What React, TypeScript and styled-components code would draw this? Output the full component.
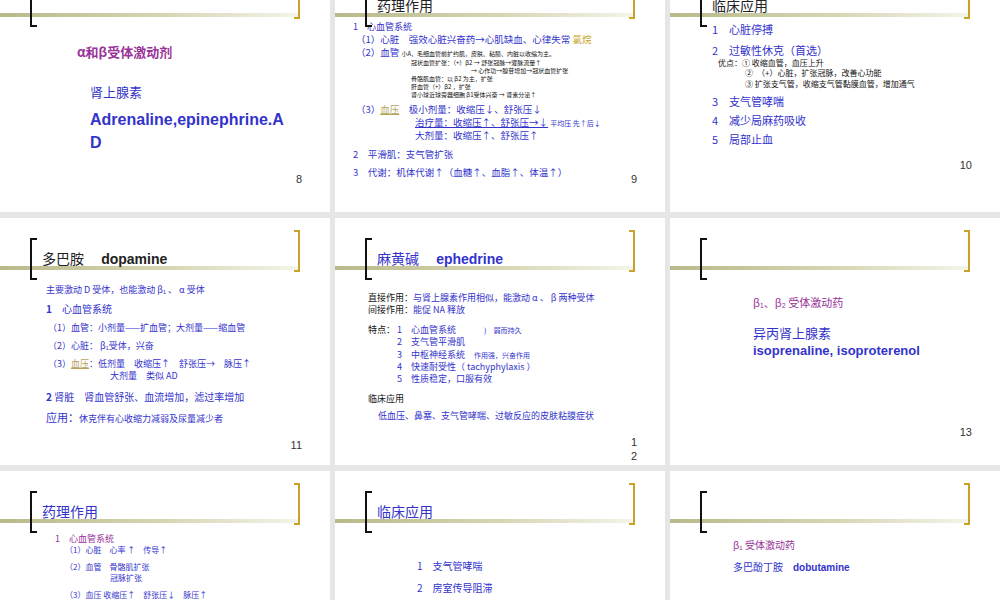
import React from 'react'
import styled, { createGlobalStyle } from 'styled-components'

const Global = createGlobalStyle`
  body { margin: 0; background: #e6e6e6; font-family: "Noto Sans CJK SC", "Liberation Sans", sans-serif; overflow: hidden; }
`

const Grid = styled.div`
  display: grid;
  grid-template-columns: 330px 330px 330px;
  grid-auto-rows: 247px;
  gap: 6px 5px;
  margin-top: -35px;
  width: 1000px;
`

const SlideBox = styled.div`
  position: relative;
  background: #fff;
  overflow: hidden;
  color: #3333cc;
`

const Rule = styled.div`
  position: absolute;
  left: 0;
  right: 30px;
  top: 48px;
  height: 4px;
  background: linear-gradient(90deg, #b9b98a 0%, #d6d6b4 55%, #f4f4ea 100%);
`

const LeftBracket = styled.div`
  position: absolute;
  left: 30px;
  top: 20px;
  width: 5px;
  height: 38px;
  border: 2px solid #111;
  border-right: none;
`

const RightBracket = styled.div`
  position: absolute;
  right: 30px;
  top: 12px;
  width: 4px;
  height: 38px;
  border: 2px solid #c9a227;
  border-left: none;
`

const Title = styled.div<{ $color?: string }>`
  position: absolute;
  left: 42px;
  top: 30px;
  font-size: 14px;
  color: ${p => p.$color || '#222'};
  white-space: nowrap;
`

const Body = styled.div<{ $top?: number; $left?: number }>`
  padding: ${p => p.$top ?? 62}px 8px 0 ${p => p.$left ?? 20}px;
  display: flex;
  flex-direction: column;
`

const Line = styled.div<{ $size?: number; $color?: string; $indent?: number; $gap?: number; $bold?: boolean }>`
  font-size: ${p => p.$size ?? 10}px;
  color: ${p => p.$color || '#3333cc'};
  padding-left: ${p => p.$indent ?? 0}px;
  margin-top: ${p => p.$gap ?? 0}px;
  font-weight: ${p => (p.$bold ? 700 : 400)};
  white-space: nowrap;
  line-height: 1.35;
`

const Latin = styled.span`
  font-family: "Liberation Sans", sans-serif;
  font-weight: 700;
`

const U = styled.span`
  color: #b5a35a;
  text-decoration: underline;
`

const PageNo = styled.div<{ $top: number }>`
  position: absolute;
  right: 28px;
  top: ${p => p.$top}px;
  font-family: "Liberation Sans", sans-serif;
  font-size: 11px;
  color: #333;
  line-height: 1.3;
  text-align: center;
`

function Slide({ title, titleColor, children }: { title?: React.ReactNode; titleColor?: string; children?: React.ReactNode }) {
  return (
    <SlideBox>
      <Rule />
      <LeftBracket />
      <RightBracket />
      {title && <Title $color={titleColor}>{title}</Title>}
      {children}
    </SlideBox>
  )
}

export default function App() {
  return (
    <>
      <Global />
      <Grid>
        <Slide>
          <Body $top={78} $left={77}>
            <Line $size={13} $color="#993399" $bold>α和β受体激动剂</Line>
            <Line $size={13} $indent={13} $gap={22}>肾上腺素</Line>
            <Line $size={16} $indent={13} $gap={8}><Latin>Adrenaline,epinephrine.A</Latin></Line>
            <Line $size={16} $indent={13}><Latin>D</Latin></Line>
          </Body>
          <PageNo $top={207}>8</PageNo>
        </Slide>
        <Slide title="药理作用">
          <Body $top={56} $left={18}>
            <Line $size={9}>1　心血管系统</Line>
            <Line $size={9.5} $indent={3}>（1）心脏　强效心脏兴奋药→心肌缺血、心律失常 <span style={{ color: '#c9a227' }}>氯烷</span></Line>
            <Line $size={9.5} $indent={3}>（2）血管 <span style={{ fontSize: 6, color: '#111' }}>小A，毛细血管前扩约肌，皮肤、粘膜、内脏以收缩为主。</span></Line>
            <Line $size={6} $color="#111" $indent={58}>冠状血管扩张：（+）β2 → 舒张冠脉→灌脉流量↑</Line>
            <Line $size={6} $color="#111" $indent={118}>→ 心作功→腺苷增加→冠状血管扩张</Line>
            <Line $size={6} $color="#111" $indent={58}>骨骼肌血管：以 β2 为主，扩张</Line>
            <Line $size={6} $color="#111" $indent={58}>肝血管（+）β2 ，扩张</Line>
            <Line $size={6} $color="#111" $indent={58}>肾小球近球旁器细胞 β1受体兴奋 → 肾素分泌↑</Line>
            <Line $size={9.5} $indent={3} $gap={4}>（3）<U>血压</U>　极小剂量：收缩压↓、舒张压↓</Line>
            <Line $size={9.5} $indent={62}><span style={{ textDecoration: 'underline' }}>治疗量：收缩压↑、舒张压→↓</span> <span style={{ fontSize: 7 }}>平均压 先↑后↓</span></Line>
            <Line $size={9.5} $indent={62}>大剂量：收缩压↑、舒张压↑</Line>
            <Line $size={9.5} $gap={6}>2　平滑肌：支气管扩张</Line>
            <Line $size={9.5} $gap={6}>3　代谢：机体代谢↑（血糖↑、血脂↑、体温↑）</Line>
          </Body>
          <PageNo $top={207}>9</PageNo>
        </Slide>
        <Slide title="临床应用">
          <Body $top={57} $left={42}>
            <Line $size={11}>1　心脏停搏</Line>
            <Line $size={11} $gap={6}>2　过敏性休克（首选）</Line>
            <Line $size={8} $color="#111" $indent={6}>优点：① 收缩血管，血压上升</Line>
            <Line $size={8} $color="#111" $indent={33}>②　（+）心脏，扩张冠脉，改善心功能</Line>
            <Line $size={8} $color="#111" $indent={33}>③ 扩张支气管，收缩支气管黏膜血管，增加通气</Line>
            <Line $size={11} $gap={4}>3　支气管哮喘</Line>
            <Line $size={11} $gap={4}>4　减少局麻药吸收</Line>
            <Line $size={11} $gap={4}>5　局部止血</Line>
          </Body>
          <PageNo $top={193}>10</PageNo>
        </Slide>

        <Slide title={<>多巴胺　 <Latin>dopamine</Latin></>}>
          <Body $top={66} $left={46}>
            <Line $size={9}>主要激动 D 受体，也能激动 β₁ 、 α 受体</Line>
            <Line $size={10} $gap={6}><b>1</b>　心血管系统</Line>
            <Line $size={9} $gap={6} $indent={2}>（1）血管：小剂量——扩血管；大剂量——缩血管</Line>
            <Line $size={9} $gap={6} $indent={2}>（2）心脏： β₁受体，兴奋</Line>
            <Line $size={9} $gap={6} $indent={2}>（3）<U>血压</U>：低剂量　收缩压↑　舒张压→　脉压↑</Line>
            <Line $size={9} $indent={64}>大剂量　类似 AD</Line>
            <Line $size={10} $gap={8}><b>2</b> 肾脏　肾血管舒张、血流增加，滤过率增加</Line>
            <Line $size={11} $gap={6}>应用：<span style={{ fontSize: 9 }}>休克伴有心收缩力减弱及尿量减少者</span></Line>
          </Body>
          <PageNo $top={220}>11</PageNo>
        </Slide>
        <Slide title={<span style={{ color: '#3333cc' }}>麻黄碱　 <Latin>ephedrine</Latin></span>}>
          <Body $top={74} $left={33}>
            <Line $size={9}><span style={{ color: '#111' }}>直接作用：</span>与肾上腺素作用相似，能激动 α 、 β 两种受体</Line>
            <Line $size={9}><span style={{ color: '#111' }}>间接作用：</span>能促 NA 释放</Line>
            <Line $size={9} $gap={8}><span style={{ color: '#111' }}>特点：</span> 1　心血管系统 <span style={{ marginLeft: 26, fontSize: 7 }}>{'}'}　弱而持久</span></Line>
            <Line $size={9} $indent={29}>2　支气管平滑肌</Line>
            <Line $size={9} $indent={29}>3　中枢神经系统　<span style={{ fontSize: 7 }}>作用强，兴奋作用</span></Line>
            <Line $size={9} $indent={29}>4　快速耐受性（ tachyphylaxis ）</Line>
            <Line $size={9} $indent={29}>5　性质稳定，口服有效</Line>
            <Line $size={9} $color="#111" $gap={8}>临床应用</Line>
            <Line $size={9} $gap={5} $indent={10}>低血压、鼻塞、支气管哮喘、过敏反应的皮肤粘膜症状</Line>
          </Body>
          <PageNo $top={217}>1<br />2</PageNo>
        </Slide>
        <Slide>
          <Body $top={77} $left={83}>
            <Line $size={11} $color="#993399">β₁、β₂ 受体激动药</Line>
            <Line $size={13} $gap={14}>异丙肾上腺素</Line>
            <Line $size={13}><Latin>isoprenaline, isoproterenol</Latin></Line>
          </Body>
          <PageNo $top={207}>13</PageNo>
        </Slide>

        <Slide title={<span style={{ color: '#3333cc' }}>药理作用</span>}>
          <Body $top={62} $left={55}>
            <Line $size={9} $color="#993399">1　心血管系统</Line>
            <Line $size={8} $indent={10}>（1）心脏　心率 ↑　传导↑</Line>
            <Line $size={8} $indent={10} $gap={6}>（2）血管　骨骼肌扩张</Line>
            <Line $size={8} $indent={55}>冠脉扩张</Line>
            <Line $size={8} $indent={10} $gap={6}>（3）血压 收缩压↑　舒张压↓　脉压↑</Line>
          </Body>
        </Slide>
        <Slide title={<span style={{ color: '#3333cc' }}>临床应用</span>}>
          <Body $top={88} $left={82}>
            <Line $size={10}>1　支气管哮喘</Line>
            <Line $size={10} $gap={8}>2　房室传导阻滞</Line>
          </Body>
        </Slide>
        <Slide>
          <Body $top={67} $left={63}>
            <Line $size={10} $color="#993399">β₁ 受体激动药</Line>
            <Line $size={10} $gap={8}>多巴酚丁胺　<Latin>dobutamine</Latin></Line>
          </Body>
        </Slide>
      </Grid>
    </>
  )
}
